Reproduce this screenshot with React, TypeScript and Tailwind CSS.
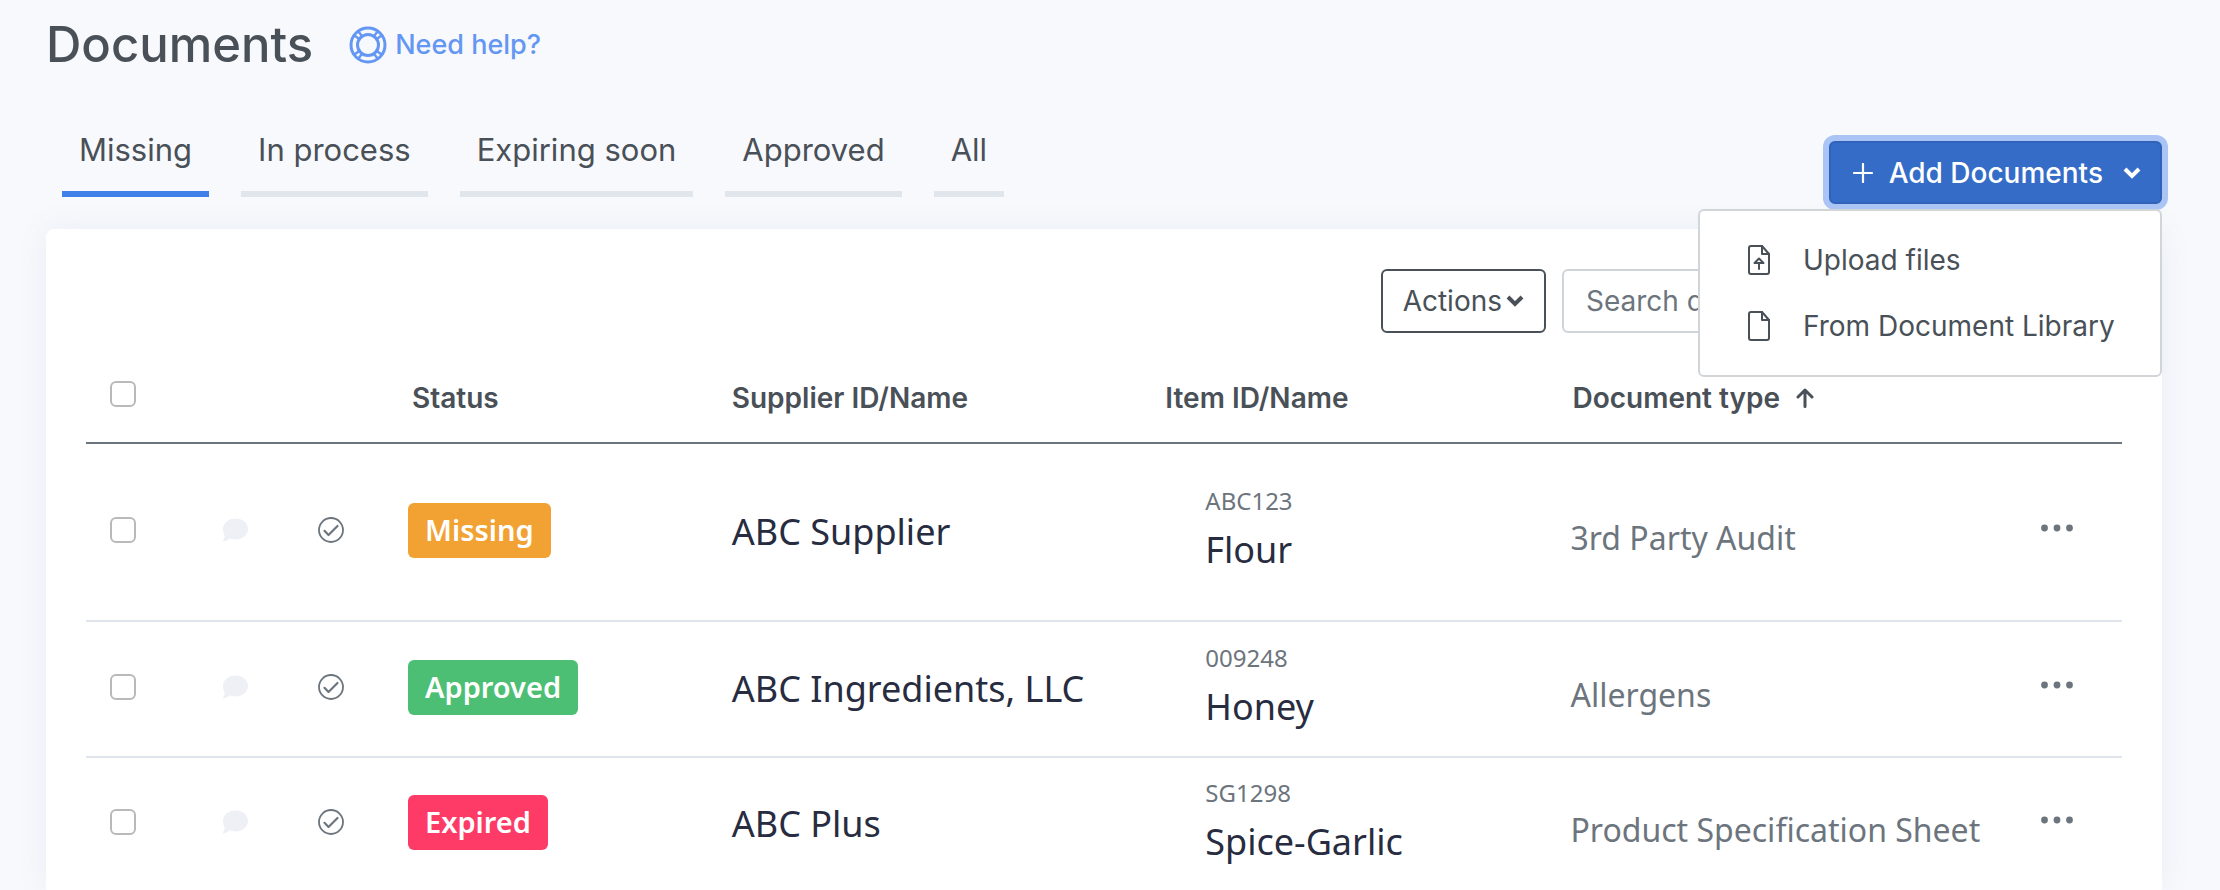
import React from "react";

type Status = "Missing" | "Approved" | "Expired";

interface DocumentRow {
  status: Status;
  supplier: string;
  itemId: string;
  itemName: string;
  documentType: string;
  height: string;
}

const TABS = ["Missing", "In process", "Expiring soon", "Approved", "All"];

const ROWS: DocumentRow[] = [
  {
    status: "Missing",
    supplier: "ABC Supplier",
    itemId: "ABC123",
    itemName: "Flour",
    documentType: "3rd Party Audit",
    height: "h-[178px]",
  },
  {
    status: "Approved",
    supplier: "ABC Ingredients, LLC",
    itemId: "009248",
    itemName: "Honey",
    documentType: "Allergens",
    height: "h-[136px]",
  },
  {
    status: "Expired",
    supplier: "ABC Plus",
    itemId: "SG1298",
    itemName: "Spice-Garlic",
    documentType: "Product Specification Sheet",
    height: "h-[133px]",
  },
];

const BADGE_COLORS: Record<Status, string> = {
  Missing: "bg-[#f2a133]",
  Approved: "bg-[#4dbf74]",
  Expired: "bg-[#fd3b66]",
};

function HelpIcon() {
  return (
    <svg viewBox="0 0 38 38" className="size-[38px]" fill="none" stroke="currentColor" strokeWidth="3" aria-hidden="true">
      <circle cx="19" cy="19" r="17" />
      <circle cx="19" cy="19" r="10.5" />
      <path d="M5.5 9.5 10.500 13.200M9.5 5.5 13.200 10.500M28.5 5.5 24.800 10.500M32.5 9.5 27.500 13.200M5.5 28.5 10.500 24.800M9.5 32.5 13.200 27.500M28.5 32.5 24.800 27.500M32.5 28.5 27.500 24.800" strokeWidth="2.4" />
    </svg>
  );
}

function PlusIcon() {
  return (
    <svg viewBox="0 0 20 20" className="size-5" stroke="currentColor" strokeWidth="2.2" strokeLinecap="round" aria-hidden="true">
      <path d="M10 1v18M1 10h18" />
    </svg>
  );
}

function ChevronIcon() {
  return (
    <svg viewBox="0 0 18 12" className="h-3 w-[18px]" fill="none" stroke="currentColor" strokeWidth="4" aria-hidden="true">
      <path d="M2 2l7 7 7-7" />
    </svg>
  );
}

function FileIcon({ upload = false }: { upload?: boolean }) {
  return (
    <svg viewBox="0 0 24 32" className="h-8 w-6" fill="none" stroke="currentColor" strokeWidth="2" strokeLinejoin="round" strokeLinecap="round" aria-hidden="true">
      <path d="M4 2h11l7 8v18a2 2 0 0 1-2 2H4a2 2 0 0 1-2-2V4a2 2 0 0 1 2-2z" />
      <path d="M15 2v8h7" />
      {upload && <path d="M12 25v-6M7.500 19 12 14.500 16.500 19z" />}
    </svg>
  );
}

function CommentIcon() {
  return (
    <svg viewBox="0 0 26 24" className="h-6 w-[26px]" fill="currentColor" aria-hidden="true">
      <path d="M13.500 0.500C20.400 0.500 26 5.100 26 11s-5.600 10.500-12.500 10.500c-2 0-4-.4-5.700-1.200C6 22.400 3.500 23.400.5 23.400c1.300-1.600 2.100-3.500 2.200-5.600C1.500 15.800 1 13.500 1 11 1 5.100 6.600.5 13.500.5z" />
    </svg>
  );
}

function CheckCircleIcon() {
  return (
    <svg viewBox="0 0 26 26" className="size-[26px]" fill="none" stroke="currentColor" strokeWidth="1.8" aria-hidden="true">
      <circle cx="13" cy="13" r="12" />
      <path d="M6.500 13.800 10.500 18 19.500 9" strokeWidth="2.200" strokeLinecap="round" strokeLinejoin="round" />
    </svg>
  );
}

function SortIcon() {
  return (
    <svg viewBox="0 0 18 20" className="h-5 w-[18px]" fill="none" stroke="currentColor" strokeWidth="3" strokeLinecap="round" strokeLinejoin="round" aria-hidden="true">
      <path d="M9 18.500V2M2 9l7-7 7 7" />
    </svg>
  );
}

function MoreIcon() {
  return (
    <svg viewBox="0 0 32 8" className="h-2 w-8" fill="currentColor" aria-hidden="true">
      <circle cx="3.500" cy="4" r="3.400" />
      <circle cx="16" cy="4" r="3.400" />
      <circle cx="28.500" cy="4" r="3.400" />
    </svg>
  );
}

function Checkbox({ label }: { label: string }) {
  return (
    <input
      type="checkbox"
      aria-label={label}
      className="block size-[26px] appearance-none rounded-md border-2 border-[#b9b9b9] bg-white checked:bg-[#3f7fe8]"
    />
  );
}

function AddDocumentsMenu() {
  return (
    <div className="relative">
      <button
        type="button"
        aria-haspopup="menu"
        aria-expanded="true"
        className="flex h-[63px] items-center rounded-md border-2 border-[#2f62b8] bg-[#346cc8] pr-[19px] pl-[22px] text-[28px] leading-none font-medium text-white ring-6 ring-[#a9c4f5]"
      >
        <PlusIcon />
        <span className="mr-5 ml-4">Add Documents</span>
        <ChevronIcon />
      </button>
      <ul
        role="menu"
        className="absolute top-full right-0 z-10 mt-[5px] flex w-[464px] flex-col rounded-md border-2 border-[#d2d5d8] bg-white py-4"
      >
        {["Upload files", "From Document Library"].map((label, index) => (
          <li key={label} role="none">
            <button
              type="button"
              role="menuitem"
              className="flex h-[66px] w-full items-center gap-8 pl-[47px] text-left text-[28px] whitespace-nowrap text-[#495057]"
            >
              <FileIcon upload={index === 0} />
              {label}
            </button>
          </li>
        ))}
      </ul>
    </div>
  );
}

export default function App() {
  return (
    <div className="flex min-h-screen flex-col bg-[#f8f9fd] pr-[58px] pl-[46px] font-['Inter',sans-serif] text-[#495057]">
      <header className="flex h-[120px] items-start gap-9 pt-3">
        <h1 className="text-[49px] leading-[66px] font-medium">Documents</h1>
        <a href="#help" className="flex h-[66px] items-center gap-2 text-[27px] font-medium text-[#6497f3]">
          <HelpIcon />
          Need help?
        </a>
      </header>

      <div className="mb-[25px] flex items-end justify-between">
        <nav className="flex h-[84px] items-start gap-8 pl-4" aria-label="Document status">
          {TABS.map((tab, index) => (
            <a
              key={tab}
              href="#documents"
              aria-current={index === 0 ? "page" : undefined}
              className={
                index === 0
                  ? "h-[77px] border-b-6 border-[#3f7fe8] px-[17px] text-[31px] leading-[60px]"
                  : "h-[77px] border-b-6 border-[#e1e6ed] px-[17px] text-[31px] leading-[60px]"
              }
            >
              {tab}
            </a>
          ))}
        </nav>
        <AddDocumentsMenu />
      </div>

      <main id="documents" className="grow rounded-t-lg bg-white px-10 pt-10 shadow-[0_0_32px_rgba(72,110,140,0.09)]">
        <div className="flex justify-end gap-4">
          <button
            type="button"
            className="flex h-16 items-center gap-1 rounded-md border-2 border-[#495057] px-5 text-[28px]"
          >
            Actions
            <ChevronIcon />
          </button>
          <input
            type="search"
            aria-label="Search documents"
            placeholder="Search documents"
            className="h-16 w-[560px] rounded-md border-2 border-[#ced4da] px-[22px] text-[28px] placeholder:text-[#6c757d]"
          />
        </div>

        <table className="w-full table-fixed border-collapse text-left">
          <thead>
            <tr className="h-[110px] border-b-2 border-[#6c757d] text-[28px] font-semibold">
              <th className="w-[124px] pt-3 pl-6">
                <Checkbox label="Select all documents" />
              </th>
              <th className="w-24" aria-label="Comments" />
              <th className="w-24" aria-label="Review" />
              <th className="w-[16%] pt-5 pl-2.5 font-semibold">Status</th>
              <th className="w-[21%] pt-5 pl-1 font-semibold">Supplier ID/Name</th>
              <th className="w-[20%] pt-5 pl-2.5 font-semibold">Item ID/Name</th>
              <th className="pt-5 pl-2.5 font-semibold">
                <span className="flex items-center gap-4">
                  Document type
                  <SortIcon />
                </span>
              </th>
              <th className="w-[93px]" aria-label="More" />
            </tr>
          </thead>
          <tbody className="font-['Noto_Sans',sans-serif]">
            {ROWS.map((row) => (
              <tr key={row.itemId} className={`${row.height} border-b-2 border-[#dfe5ea] last:border-b-0`}>
                <td className="pb-1 pl-6">
                  <Checkbox label={`Select ${row.itemName}`} />
                </td>
                <td className="pb-1 pl-3">
                  <button type="button" aria-label="Comments" className="block text-[#eef0f6]">
                    <CommentIcon />
                  </button>
                </td>
                <td className="pb-1 pl-3">
                  <button type="button" aria-label="Mark as reviewed" className="block text-[#6c757d]">
                    <CheckCircleIcon />
                  </button>
                </td>
                <td className="pb-1 pl-1.5">
                  <span
                    className={`${BADGE_COLORS[row.status]} inline-block h-[55px] rounded-md px-[17px] align-middle text-[29px] leading-[54px] font-semibold text-white`}
                  >
                    {row.status}
                  </span>
                </td>
                <td className="pl-1 text-[36px] whitespace-nowrap text-[#272c40]">{row.supplier}</td>
                <td className="pb-1 pl-[50px]">
                  <div className="text-[24px] leading-10 text-[#6c757d]">{row.itemId}</div>
                  <div className="text-[36px] leading-[58px] whitespace-nowrap text-[#272c40]">{row.itemName}</div>
                </td>
                <td className="pt-3 pl-2 text-[32px] whitespace-nowrap text-[#6c757d]">{row.documentType}</td>
                <td className="pb-2 pl-3">
                  <button type="button" aria-label={`More actions for ${row.itemName}`} className="block text-[#6c757d]">
                    <MoreIcon />
                  </button>
                </td>
              </tr>
            ))}
          </tbody>
        </table>
      </main>
    </div>
  );
}
